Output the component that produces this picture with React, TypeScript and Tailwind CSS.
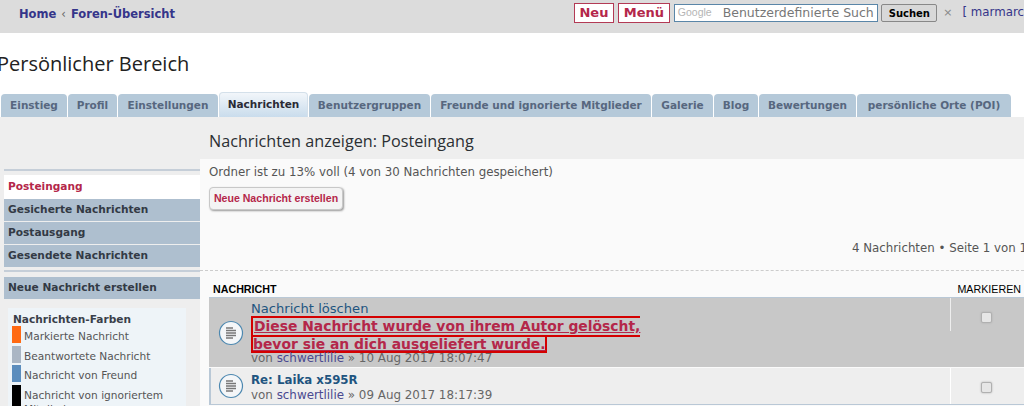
import React from "react";

const verdana = "font-['DejaVu_Sans',sans-serif]";

const tabs = [
  { label: "Einstieg", w: "w-[66px]" },
  { label: "Profil", w: "w-[49px]" },
  { label: "Einstellungen", w: "w-[100px]" },
  { label: "Nachrichten", w: "w-[89px]", active: true },
  { label: "Benutzergruppen", w: "w-[121px]" },
  { label: "Freunde und ignorierte Mitglieder", w: "w-[220px]" },
  { label: "Galerie", w: "w-[61px]" },
  { label: "Blog", w: "w-[44px]" },
  { label: "Bewertungen", w: "w-[97px]" },
  { label: "persönliche Orte (POI)", w: "w-[154px]" },
];

const folders = ["Gesicherte Nachrichten", "Postausgang", "Gesendete Nachrichten"];

const legend = [
  { color: "bg-[#ff6a13]", label: "Markierte Nachricht" },
  { color: "bg-[#aab6c4]", label: "Beantwortete Nachricht" },
  { color: "bg-[#5b8dbd]", label: "Nachricht von Freund" },
  { color: "bg-black", label: "Nachricht von ignoriertem Mitglied" },
];

function TopicIcon() {
  return (
    <svg width="26" height="26" viewBox="0 0 26 26" className="shrink-0">
      <circle cx="13" cy="13" r="11.5" fill="#f4f6f8" stroke="#4d88b0" strokeWidth="1.2" />
      <path d="M8 8h7M8 10.5h10M8 13h10M8 15.5h10M8 18h7" stroke="#777" strokeWidth="1.3" fill="none" />
    </svg>
  );
}

function Checkbox() {
  return <span className="block w-[11px] h-[11px] rounded-[2px] bg-[#e6e6e6] border border-[#b0b0b0] shadow-[0_0_2px_#aaa]" />;
}

export default function App() {
  return (
    <div className={`w-[1024px] h-[406px] overflow-hidden bg-white ${verdana}`}>
      {/* top bar */}
      <div className="h-[33px] bg-[#dcdcdc] flex justify-between pl-[19px]">
        <div className="flex items-center h-[29px] text-[11.5px] font-bold text-[#35358a]">
          <span>Home</span>
          <span className="mx-[5px] text-[#666] font-normal">‹</span>
          <span>Foren-Übersicht</span>
        </div>
        <div className="flex items-center shrink-0 w-[450px] h-[26px] whitespace-nowrap">
          <span className="h-[20px] w-[40px] border border-[#b33a55] bg-white text-[#b4274a] text-[13px] font-bold flex items-center justify-center">Neu</span>
          <span className="ml-[4px] h-[20px] w-[52px] border border-[#b33a55] bg-white text-[#b4274a] text-[13px] font-bold flex items-center justify-center">Menü</span>
          <div className="ml-[4px] h-[18px] w-[205px] border border-[#5a86a8] bg-white flex items-center overflow-hidden pl-[3px] text-[12.5px] text-[#777]">
            <span className="text-[10.5px] text-[#b5b5b5] font-['Liberation_Sans',sans-serif]">Google</span>
            <span className="ml-[11px]">Benutzerdefinierte Such</span>
          </div>
          <span className="ml-[3px] h-[18px] w-[56px] rounded-[2px] border border-[#888] bg-[#d8d8d8] text-[10px] font-bold text-black flex items-center justify-center">Suchen</span>
          <span className="ml-[6px] text-[11px] text-[#888]">×</span>
          <span className="ml-[10px] text-[11.8px] text-[#35358a]">[ marmarc</span>
        </div>
      </div>

      {/* page title */}
      <h1 className="h-[61px] pt-[17px] -ml-[3px] text-[20px] leading-[28px] text-[#222] font-['Open_Sans',sans-serif]">Persönlicher Bereich</h1>

      {/* tabs */}
      <div className="flex pl-[1px] gap-[1px] h-[23px] items-end">
        {tabs.map((tab) => (
          <span
            key={tab.label}
            className={`${tab.w} shrink-0 flex items-center justify-center rounded-t-[4px] text-[10.5px] font-bold whitespace-nowrap ${
              tab.active
                ? "h-[25px] bg-gradient-to-b from-[#f2f6fa] to-[#c9dcec] text-[#2a2a35] border border-b-0 border-[#d4e0ea]"
                : "h-[23px] bg-[#b5c9d9] text-[#57677f]"
            }`}
          >
            {tab.label}
          </span>
        ))}
      </div>

      {/* main area */}
      <div className="h-[289px] bg-[#eeeeee] flex overflow-hidden">
        {/* sidebar */}
        <div className="w-[200px] shrink-0 pl-[4px] pt-[52px]">
          <div className="border-t-2 border-[#c5ced8] pt-[4px]">
            <div className="h-[24px] bg-white flex items-center pl-[4px] text-[10.6px] font-bold text-[#b4274a]">Posteingang</div>
            {folders.map((folder) => (
              <div key={folder} className="h-[22px] mb-[1px] bg-[#aebfcf] flex items-center pl-[4px] text-[10.6px] font-bold text-[#333a45]">{folder}</div>
            ))}
          </div>
          <div className="mt-[3px] border-t-2 border-[#c5ced8] pt-[5px]">
            <div className="h-[22px] bg-[#aebfcf] flex items-center pl-[4px] text-[10.6px] font-bold text-[#333a45]">Neue Nachricht erstellen</div>
          </div>
          <div className="mt-[9px] ml-[4px] w-[178px] h-[120px] bg-[#eef4f8] pl-[4px] pt-[5px]">
            <div className="pl-[1px] text-[10.6px] font-bold text-[#3a3f4a] leading-[13px]">Nachrichten-Farben</div>
            <div className="flex flex-col gap-[2.5px]">
              {legend.map((item) => (
                <div key={item.label} className="flex gap-[3px]">
                  <span className={`w-[9px] shrink-0 ${item.color}`} />
                  <span className="pt-[3px] text-[10.6px] leading-[14px] text-[#555]">{item.label}</span>
                </div>
              ))}
            </div>
          </div>
        </div>

        {/* content */}
        <div className="flex-1 min-w-0">
          <h2 className="h-[42px] pl-[9px] pt-[14px] text-[16.2px] leading-[20px] whitespace-nowrap text-[#2b2f33] font-['Open_Sans',sans-serif]">Nachrichten anzeigen: Posteingang</h2>
          <div className="h-[247px] bg-[#fafafa]">
            <div className="pl-[9px] pt-[6px] text-[11.8px] leading-[14px] text-[#555] whitespace-nowrap">Ordner ist zu 13% voll (4 von 30 Nachrichten gespeichert)</div>
            <div className="pl-[9px] pt-[6px]">
              <span className="inline-flex h-[23px] w-[134px] items-center justify-center rounded-[4px] bg-[#f4f4f4] border border-[#c8c8c8] shadow-[1px_1px_2px_#999] text-[10.6px] font-bold text-[#b4274a] font-['Liberation_Sans',sans-serif]">Neue Nachricht erstellen</span>
            </div>
            <div className="mt-[30px] h-[16px] whitespace-nowrap text-[11.8px] leading-[16px] text-[#555] overflow-hidden pl-[652px]">4 Nachrichten • Seite 1 von 1</div>
            <div className="mt-[14px] border-t border-dashed border-[#cccccc]" />
            <div className="h-[26px] pt-[10px] flex items-center justify-between pl-[13px] text-[10.7px] text-black font-['Liberation_Sans',sans-serif]">
              <span className="font-bold">NACHRICHT</span>
              <span className="mr-[3px]">MARKIEREN</span>
            </div>
            <div className="ml-[9px] border-t border-[#b9c8d6] bg-[#c8c8c8] h-[70px] flex">
              <div className="w-[42px] shrink-0 flex items-center justify-center pl-[2px]"><TopicIcon /></div>
              <div className="w-[699px] shrink-0 whitespace-nowrap">
                <div className="text-[13.1px] leading-[15px] pt-[3px] text-[#1f5580] box-content">Nachricht löschen</div>
                <div className="text-[13.9px] leading-[17px] font-bold text-[#b4274a] underline">
                  <div className="w-[389px] border-[2px] border-r-0 border-[#d40000] pl-[1px]">Diese Nachricht wurde von ihrem Autor gelöscht,</div>
                  <div className="w-[296px] border-b-[2px] border-r-[2px] border-l-[2px] border-[#d40000] leading-[14px]">bevor sie an dich ausgeliefert wurde.</div>
                </div>
                <div className="-mt-px text-[11.9px] leading-[12px] text-[#666]">von <span className="text-[#4a4a90]">schwertlilie</span> » 10 Aug 2017 18:07:47</div>
              </div>
              <div className="border-l border-[#eeeeee] h-[33px] flex-1 pt-[14px] pl-[30px]"><Checkbox /></div>
            </div>
            <div className="ml-[9px] mt-[1px] bg-[#eeeeee] border-l-2 border-b border-[#b9c8d6] h-[37px] flex">
              <div className="w-[40px] shrink-0 flex items-center justify-center"><TopicIcon /></div>
              <div className="w-[699px] shrink-0 whitespace-nowrap pt-[4px]">
                <div className="text-[11.8px] leading-[16px] font-bold text-[#1f5580]">Re: Laika x595R</div>
                <div className="text-[11.9px] leading-[14px] text-[#666]">von <span className="text-[#4a4a90]">schwertlilie</span> » 09 Aug 2017 18:17:39</div>
              </div>
              <div className="border-l border-white flex-1 pt-[14px] pl-[30px]"><Checkbox /></div>
            </div>
          </div>
        </div>
      </div>
    </div>
  );
}
